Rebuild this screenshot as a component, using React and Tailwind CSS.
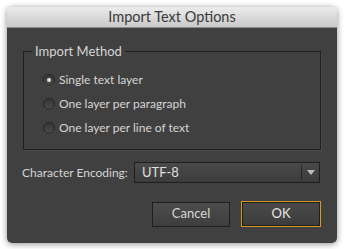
import React from 'react';

function Radio({ checked, label }) {
    return (
        <div className="flex items-center gap-[4px] h-[24px]">
            <span className="w-[12px] h-[12px] rounded-full border border-[#262626] bg-gradient-to-b from-[#363636] to-[#4a4a4a] flex items-center justify-center shadow-[0_1px_0_rgba(255,255,255,0.08)]">
                {checked && <span className="w-[4px] h-[4px] rounded-full bg-[#e0e0e0]" />}
            </span>
            <span>{label}</span>
        </div>
    );
}

export default function App() {
    return (
        <div className="w-[344px] h-[249px] bg-white p-[7px] pb-[6px] font-['Lato',sans-serif]">
            <div className="w-[330px] h-[236px] rounded-[5px] overflow-hidden flex flex-col shadow-[0_1px_6px_rgba(0,0,0,0.45)]">
                <div className="h-[21px] shrink-0 bg-gradient-to-b from-[#ececec] to-[#c9c9c9] border-b border-[#8a8a8a] flex items-center justify-center text-[14.5px] text-[#3a3a3a]">
                    Import Text Options
                </div>
                <div className="flex-1 bg-[#404040] text-[#d6d6d6] text-[12px] px-[16px] pt-[23px]">
                    <div className="relative border border-[#1e1e1e] shadow-[1px_1px_0_rgba(255,255,255,0.06)] h-[99px] pl-[19px] pt-[16px]">
                        <span className="absolute -top-[9px] left-[8px] px-[3px] bg-[#404040] text-[13px] leading-[16px]">Import Method</span>
                        <Radio checked label="Single text layer" />
                        <Radio label="One layer per paragraph" />
                        <Radio label="One layer per line of text" />
                    </div>
                    <div className="flex items-center mt-[12px]">
                        <span className="w-[112px] shrink-0 whitespace-nowrap text-[12px] -ml-[1px]">Character Encoding:</span>
                        <div className="w-[186px] h-[21px] border border-[#1e1e1e] bg-gradient-to-b from-[#4a4a4a] to-[#3c3c3c] flex items-center">
                            <span className="flex-1 pl-[7px] text-[13px] text-[#e0e0e0]">UTF-8</span>
                            <span className="w-px h-[15px] bg-[#262626]" />
                            <span className="w-[17px] flex justify-center">
                                <svg width="8" height="5" viewBox="0 0 8 5"><path d="M0 0h8L4 5z" fill="#bdbdbd" /></svg>
                            </span>
                        </div>
                    </div>
                    <div className="flex justify-end items-center gap-[11px] mt-[18px]">
                        <button className="w-[78px] h-[25px] border border-[#1e1e1e] bg-gradient-to-b from-[#4c4c4c] to-[#3e3e3e] text-[13px] text-[#d6d6d6]">Cancel</button>
                        <button className="w-[80px] h-[26px] border-[1.5px] border-[#d69a1f] bg-gradient-to-b from-[#4a4a4a] to-[#3c3c3c] text-[13px] text-[#e6e6e6] outline outline-1 outline-[#1e1e1e] -outline-offset-[2px]">OK</button>
                    </div>
                </div>
            </div>
        </div>
    );
}
